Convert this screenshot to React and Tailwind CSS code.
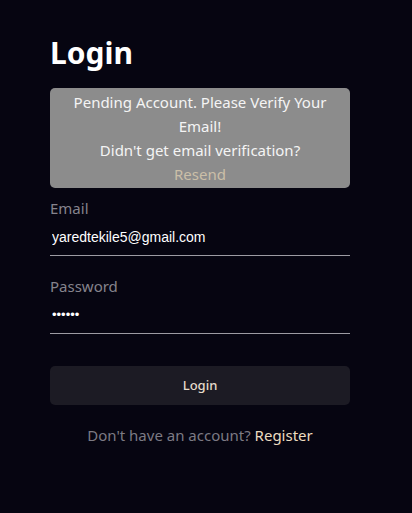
import React, { useState } from 'react';

function App() {
  const [email, setEmail] = useState('yaredtekile5@gmail.com');
  const [password, setPassword] = useState('123456');

  return (
    <div className="min-h-[513px] w-full bg-[#060511] font-['Noto_Sans',sans-serif]">
      <div className="ml-[50px] w-[300px] pt-[33px]">
        <h1 className="text-[30px] font-bold leading-[40px] text-white">Login</h1>

        {/* Pending account alert */}
        <div className="mt-[15px] rounded-[5px] bg-[#8c8c8c] px-3 py-[2px] text-center text-[15px] leading-[24px] text-[#f4f4f4]">
          <p>Pending Account. Please Verify Your Email!</p>
          <p>Didn't get email verification?</p>
          <button className="leading-[20px] text-[#cbbfa8]">Resend</button>
        </div>

        <form className="mt-[9px]" onSubmit={(e) => e.preventDefault()}>
          <label className="block text-[15px] leading-[22px] text-[#85838c]">Email</label>
          <input
            type="email"
            value={email}
            onChange={(e) => setEmail(e.target.value)}
            className="mt-[8px] block w-full border-b border-[#9c9ba3] bg-transparent px-[2px] pb-[8px] font-['Liberation_Sans',sans-serif] text-[14px] leading-[20px] text-white outline-none"
          />

          <label className="mt-[19px] block text-[15px] leading-[22px] text-[#85838c]">Password</label>
          <input
            type="password"
            value={password}
            onChange={(e) => setPassword(e.target.value)}
            className="mt-[8px] block w-full border-b border-[#9c9ba3] bg-transparent px-[2px] pb-[8px] font-['Liberation_Sans',sans-serif] text-[13px] leading-[20px] text-white outline-none"
          />

          <button
            type="submit"
            className="mt-[32px] block h-[39px] w-full rounded-[5px] bg-[#1c1b24] text-[13px] font-medium text-[#e6dccb]"
          >
            Login
          </button>
        </form>

        <p className="mt-[19px] text-center text-[15px] text-[#7c7a84]">
          Don't have an account? <a className="text-[#ecdcc0]">Register</a>
        </p>
      </div>
    </div>
  );
}

export default App;
